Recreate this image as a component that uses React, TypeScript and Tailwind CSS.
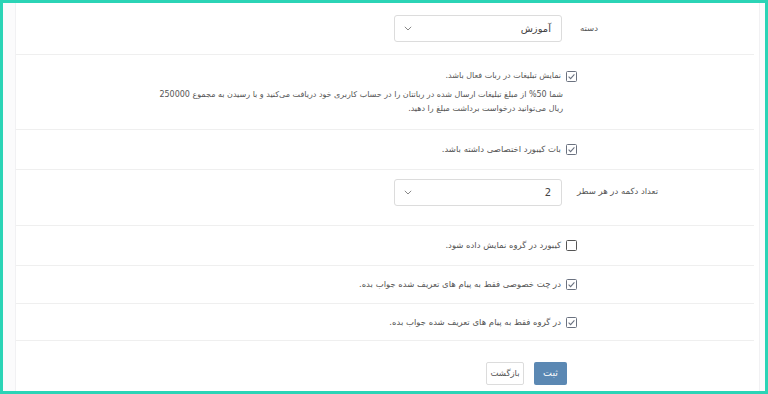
import React from 'react';

const font = { fontFamily: '"DejaVu Sans", "Noto Sans", sans-serif' };

const Check = ({ on }: { on: boolean }) => (
  <svg width="11" height="11" viewBox="0 0 11 11" className="shrink-0">
    <rect x="0.5" y="0.5" width="10" height="10" rx="1" fill="#fff" stroke={on ? '#6b7280' : '#555'} />
    {on && <path d="M2.6 5.6 L4.6 7.6 L8.4 3.4" fill="none" stroke="#6b7280" strokeWidth="1.1" />}
  </svg>
);

const Chevron = () => (
  <svg width="8" height="5" viewBox="0 0 8 5">
    <path d="M0.8 0.8 L4 4 L7.2 0.8" fill="none" stroke="#888" strokeWidth="1" />
  </svg>
);

const Select = ({ value }: { value: string }) => (
  <div className="flex h-[27px] w-[168px] items-center justify-between rounded-[3px] border border-[#dcdcdc] bg-white pl-[9px] pr-[10px]">
    <span className="text-[10px] text-[#444]">{value}</span>
    <Chevron />
  </div>
);

const CheckRow = ({ on, text, h }: { on: boolean; text: string; h: string }) => (
  <div className={`flex items-center border-b border-[#efefef] ${h}`}>
    <div className="w-[177px] shrink-0" />
    <div className="flex items-center gap-[5px]">
      <Check on={on} />
      <span className="text-[8.5px] text-[#555]">{text}</span>
    </div>
  </div>
);

const rows = [
  { on: true, text: 'در چت خصوصی فقط به پیام های تعریف شده جواب بده.', h: 'h-[38px]' },
  { on: true, text: 'در گروه فقط به پیام های تعریف شده جواب بده.', h: 'h-[37px]' },
];

export default function App() {
  return (
    <div className="h-[394px] w-[768px] overflow-hidden border-[3px] border-[#2bd4b6] bg-[#fbfbfc]" style={font}>
      <div dir="rtl" className="ml-[12px] mr-[5px] h-full border-x border-[#f1f1f3] bg-white pr-[5px]">
        <div className="flex h-[52px] items-center border-b border-[#efefef]">
          <div className="w-[177px] shrink-0 whitespace-nowrap pl-[3px] text-left text-[8.5px] text-[#555]">دسته</div>
          <div className="pr-[15px]">
            <Select value="آموزش" />
          </div>
        </div>

        <div className="flex h-[75px] border-b border-[#efefef] pt-[15px]">
          <div className="w-[177px] shrink-0" />
          <div>
            <div className="flex items-center gap-[5px]">
              <Check on />
              <span className="text-[8px] text-[#555]">نمایش تبلیغات در ربات فعال باشد.</span>
            </div>
            <p className="mt-[6px] pr-[14px] text-[8px] leading-[14px] text-[#555]">
              شما 50% از مبلغ تبلیغات ارسال شده در رباتتان را در حساب کاربری خود دریافت می‌کنید و با رسیدن به مجموع 250000
              <br />
              ریال می‌توانید درخواست برداشت مبلغ را دهید.
            </p>
          </div>
        </div>

        <CheckRow on text="بات کیبورد اختصاصی داشته باشد." h="h-[40px]" />

        <div className="flex h-[56px] items-start border-b border-[#efefef] pt-[9px]">
          <div className="w-[177px] shrink-0 whitespace-nowrap pt-[6px] text-left text-[8.5px] text-[#555]">تعداد دکمه در هر سطر</div>
          <div className="pr-[15px]">
            <Select value="2" />
          </div>
        </div>

        <CheckRow on={false} text="کیبورد در گروه نمایش داده شود." h="h-[40px]" />
        {rows.map((r) => (
          <CheckRow key={r.text} on={r.on} text={r.text} h={r.h} />
        ))}

        <div className="flex h-[50px] items-start pt-[21px]">
          <div className="w-[187px] shrink-0" />
          <div className="flex items-center gap-[10px]">
            <button className="h-[23px] w-[33px] rounded-[2px] bg-[#5b88b3] text-[9.5px] text-white">ثبت</button>
            <button className="h-[23px] w-[38px] rounded-[2px] border border-[#dcdcdc] bg-white text-[8.5px] text-[#555]">بازگشت</button>
          </div>
        </div>
      </div>
    </div>
  );
}
